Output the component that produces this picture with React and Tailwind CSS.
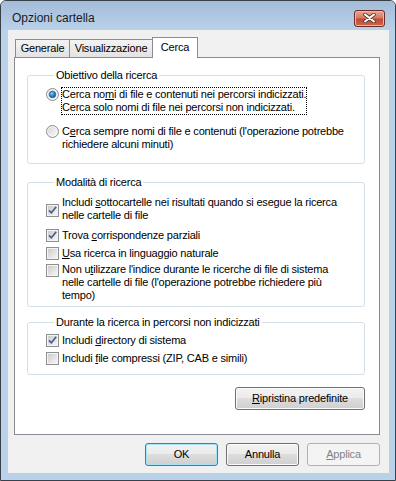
import React from 'react';

// Windows 7 style "Opzioni cartella" dialog, tab "Cerca"

function Radio({ checked }) {
  return (
    <svg width="13" height="13" viewBox="0 0 13 13" className="shrink-0">
      <defs>
        <linearGradient id="rbg" x1="0" y1="0" x2="1" y2="1">
          <stop offset="0" stopColor="#d6d6d6" />
          <stop offset="1" stopColor="#fbfbfb" />
        </linearGradient>
        <radialGradient id="rdot" cx="0.4" cy="0.35" r="0.7">
          <stop offset="0" stopColor="#8fd0fb" />
          <stop offset="0.5" stopColor="#2b86d2" />
          <stop offset="1" stopColor="#1a4f8a" />
        </radialGradient>
      </defs>
      <circle cx="6.5" cy="6.5" r="6" fill="#f4f4f4" stroke="#8c8c8c" />
      <circle cx="6.5" cy="6.5" r="4.5" fill="url(#rbg)" />
      {checked && <circle cx="6.5" cy="6.5" r="3.3" fill="url(#rdot)" stroke="#23568a" strokeWidth="0.6" />}
    </svg>
  );
}

function Check({ checked }) {
  return (
    <svg width="13" height="13" viewBox="0 0 13 13" className="shrink-0">
      <defs>
        <linearGradient id="cbg" x1="0" y1="0" x2="1" y2="1">
          <stop offset="0" stopColor="#cbcbcb" />
          <stop offset="1" stopColor="#f6f6f6" />
        </linearGradient>
      </defs>
      <rect x="0.5" y="0.5" width="12" height="12" fill="#f4f4f4" stroke="#8e8f8f" />
      <rect x="2" y="2" width="9" height="9" fill="url(#cbg)" />
      {checked && (
        <path d="M3 6.3 L5.4 8.8 L10.2 2.8" fill="none" stroke="#4b5f8c" strokeWidth="1.7" />
      )}
    </svg>
  );
}

function Key({ children }) {
  return <span className="underline underline-offset-[1px]">{children}</span>;
}

function Group({ title, className, children }) {
  return (
    <fieldset className={`rounded-[3px] border border-[#d5dfe5] ${className}`}>
      <legend className="ml-[8px] px-[2px]">{title}</legend>
      {children}
    </fieldset>
  );
}

function Option({ kind = 'check', checked, boxClass = '', align = 'items-start', children }) {
  return (
    <div className={`flex gap-[3px] ${align}`}>
      <div className={boxClass}>
        {kind === 'radio' ? <Radio checked={checked} /> : <Check checked={checked} />}
      </div>
      <div>{children}</div>
    </div>
  );
}

function Button({ children, variant = 'normal', className = '' }) {
  const styles = {
    normal:
      'border-[#707070] text-black bg-[linear-gradient(#f2f2f2,#ebebeb_50%,#dddddd_50%,#cfcfcf)] shadow-[inset_0_0_0_1px_#fbfbfb]',
    default:
      'border-[#3c7fb1] text-black bg-[linear-gradient(#f2f2f2,#ebebeb_50%,#dddddd_50%,#cfcfcf)] shadow-[inset_0_0_0_1px_#a6e3f8]',
    disabled: 'border-[#adb2b5] text-[#838383] bg-[#f4f4f4]',
  };
  return (
    <div
      className={`flex h-[23px] items-center justify-center rounded-[3px] border ${styles[variant]} ${className}`}
    >
      {children}
    </div>
  );
}

function Tab({ label, selected, className = '' }) {
  if (selected) {
    return (
      <div
        className={`relative z-10 -mb-px flex h-[21px] items-start justify-center border border-b-0 border-[#898c95] bg-white pt-[3px] ${className}`}
      >
        {label}
      </div>
    );
  }
  return (
    <div
      className={`flex h-[18px] items-center justify-center border border-b-0 border-[#898c95] bg-gradient-to-b from-[#f3f3f3] to-[#e3e3e3] ${className}`}
    >
      {label}
    </div>
  );
}

export default function App() {
  return (
    <div className="flex h-[481px] w-[396px] flex-col overflow-hidden rounded-t-[6px] border border-[#3a4048] bg-[#bad1ea] font-['Liberation_Sans',Arial,sans-serif] text-[11px] leading-[13px] tracking-[-0.2px] text-black">
      {/* Title bar */}
      <div className="flex h-[29px] shrink-0 items-center justify-between bg-gradient-to-b from-[#a3bcd8] to-[#bad1ea] pl-[11px] pr-[10px] pt-[5px]">
        <span className="text-[12px] tracking-[0px] text-[#1b1b1b]">Opzioni cartella</span>
        <div className="flex h-[17px] w-[31px] items-center justify-center rounded-[3px] border border-[#6b2c25] bg-[linear-gradient(#e7a797,#d47a63_45%,#c24a30_55%,#d0664a)] shadow-[inset_0_0_0_1px_#eeb7a8]">
          <svg width="13" height="10" viewBox="0 0 13 10">
            <path d="M2 1.5 L11 8.5 M11 1.5 L2 8.5" stroke="#5a3a36" strokeWidth="3.6" strokeLinecap="round" />
            <path d="M2 1.5 L11 8.5 M11 1.5 L2 8.5" stroke="#ffffff" strokeWidth="2" strokeLinecap="round" />
          </svg>
        </div>
      </div>

      {/* Frame + client area */}
      <div className="flex flex-1 flex-col pb-[7px] pl-[7px] pr-[6px]">
        <div className="flex flex-1 flex-col bg-[#f0f0f0] pl-[6px] pr-[9px] pt-[6px]">
          {/* Tabs */}
          <div className="flex h-[21px] shrink-0 items-end pl-[1px]">
            <Tab label="Generale" className="w-[55px]" />
            <Tab label="Visualizzazione" className="-ml-px w-[84px]" />
            <Tab label="Cerca" selected className="-ml-px w-[46px]" />
          </div>

          {/* Tab panel */}
          <div className="flex h-[378px] shrink-0 flex-col border border-[#898c95] bg-white pl-[12px] pr-[14px]">
            <Group title="Obiettivo della ricerca" className="mt-[11px] pb-[12px] pl-[18px] pt-[6px]">
              <Option kind="radio" checked>
                <span className="inline-block outline-1 outline-dotted outline-black">
                  Cerca no<Key>m</Key>i di file e contenuti nei percorsi indicizzati.
                  <br />
                  Cerca solo nomi di file nei percorsi non indicizzati.
                </span>
              </Option>
              <div className="mt-[11px]">
                <Option kind="radio">
                  C<Key>e</Key>rca sempre nomi di file e contenuti (l'operazione potrebbe
                  <br />
                  richiedere alcuni minuti)
                </Option>
              </div>
            </Group>

            <Group title="Modalità di ricerca" className="mt-[12px] pb-[4px] pl-[18px] pt-[7px]">
              <Option checked boxClass="mt-[8px]">
                Includi <Key>s</Key>ottocartelle nei risultati quando si esegue la ricerca
                <br />
                nelle cartelle di file
              </Option>
              <div className="mt-[7px]">
                <Option checked align="items-center">
                  Trova <Key>c</Key>orrispondenze parziali
                </Option>
              </div>
              <div className="mt-[5px]">
                <Option align="items-center">
                  <Key>U</Key>sa ricerca in linguaggio naturale
                </Option>
              </div>
              <div className="mt-[3px]">
                <Option boxClass="mt-[1px]">
                  Non u<Key>t</Key>ilizzare l'indice durante le ricerche di file di sistema
                  <br />
                  nelle cartelle di file (l'operazione potrebbe richiedere più
                  <br />
                  tempo)
                </Option>
              </div>
            </Group>

            <Group title="Durante la ricerca in percorsi non indicizzati" className="mt-[9px] pb-[9px] pl-[18px] pt-[5px]">
              <Option checked align="items-center">
                Includi <Key>d</Key>irectory di sistema
              </Option>
              <div className="mt-[5px]">
                <Option align="items-center">
                  Includi <Key>f</Key>ile compressi (ZIP, CAB e simili)
                </Option>
              </div>
            </Group>

            <div className="mt-[12px] flex justify-end">
              <Button className="w-[130px]">
                <span>
                  <Key>R</Key>ipristina predefinite
                </span>
              </Button>
            </div>
          </div>

          {/* Dialog buttons */}
          <div className="mt-[8px] flex justify-end gap-[8px]">
            <Button variant="default" className="w-[73px]">OK</Button>
            <Button className="w-[73px]">Annulla</Button>
            <Button variant="disabled" className="w-[73px]">
              <span>
                <Key>A</Key>pplica
              </span>
            </Button>
          </div>
        </div>
      </div>
    </div>
  );
}
